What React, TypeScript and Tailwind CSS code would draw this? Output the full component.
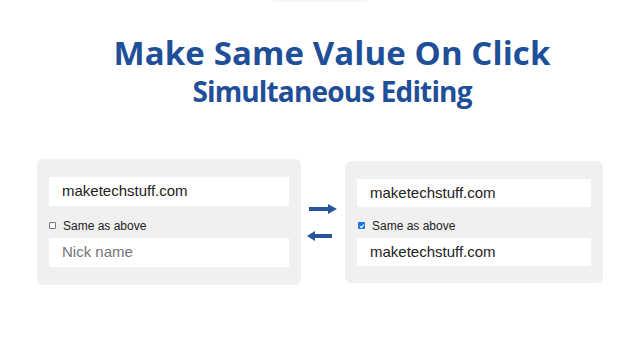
import React from "react";

const Check = ({ checked }: { checked?: boolean }) =>
  checked ? (
    <span className="w-[7px] h-[7px] rounded-[1px] bg-[#1a73e8] flex items-center justify-center">
      <svg width="6" height="6" viewBox="0 0 6 6">
        <path d="M1 3.2 L2.4 4.6 L5 1.6" stroke="#fff" strokeWidth="1.2" fill="none" />
      </svg>
    </span>
  ) : (
    <span className="w-[7px] h-[7px] rounded-[1px] border border-[#767676] bg-white" />
  );

const Field = ({ value, placeholder, h }: { value?: string; placeholder?: string; h: string }) => (
  <div className={`bg-white flex items-center px-[13px] text-[15px] ${h}`}>
    {value ? <span className="text-[#222]">{value}</span> : <span className="text-[#757575]">{placeholder}</span>}
  </div>
);

const App = () => {
  return (
    <div className="w-[640px] h-[360px] bg-white relative overflow-hidden" style={{ fontFamily: "'Liberation Sans', Arial, sans-serif" }}>
      <div className="absolute top-0 left-[273px] w-[94px] h-[2px] bg-[#f6f6f6]" />

      <div className="pt-[33px] pl-[24px] text-center text-[#1f4f99] font-bold" style={{ fontFamily: "'Open Sans', sans-serif" }}>
        <h1 className="text-[33px] leading-[40px] tracking-[0.1px]">Make Same Value On Click</h1>
        <h2 className="mt-[1px] text-[28px] leading-[34px] tracking-[-0.85px]">Simultaneous Editing</h2>
      </div>

      <div className="absolute left-0 top-[159px] w-full flex items-start pl-[37px]">
        <div className="w-[264px] bg-[#f0f0f0] rounded-[6px] px-[12px] pt-[18px] pb-[18px]">
          <Field value="maketechstuff.com" h="h-[29px]" />
          <div className="h-[32px] flex items-center gap-[7px] text-[12px] text-[#222] pt-[7px]">
            <Check />
            <span>Same as above</span>
          </div>
          <Field placeholder="Nick name" h="h-[29px]" />
        </div>

        <div className="ml-[6px] mt-[44px] w-[31px]">
          <svg width="31" height="40" viewBox="0 0 31 40" fill="#26559c">
            <path d="M2 4 H21 V1 L30 6 L21 11 V8 H2 Z" />
            <path d="M0 33 L8 28 V31 H25 V35 H8 V38 Z" />
          </svg>
        </div>

        <div className="ml-[7px] mt-[2px] w-[258px] bg-[#f0f0f0] rounded-[6px] px-[12px] pt-[18px] pb-[17px]">
          <Field value="maketechstuff.com" h="h-[28px]" />
          <div className="h-[31px] flex items-center gap-[7px] text-[12px] text-[#222] pl-[1px] pt-[6px]">
            <Check checked />
            <span>Same as above</span>
          </div>
          <Field value="maketechstuff.com" h="h-[28px]" />
        </div>
      </div>
    </div>
  );
};

export default App;
